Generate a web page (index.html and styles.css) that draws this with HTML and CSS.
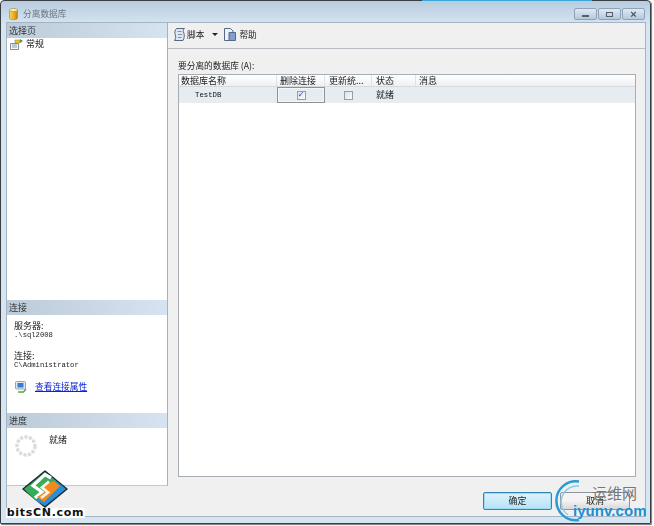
FILE: index.html
```html
<!DOCTYPE html>
<html lang="zh">
<head>
<meta charset="utf-8">
<title>分离数据库</title>
<link rel="stylesheet" href="styles.css">
</head>
<body>
<div class="window">
  <header class="titlebar">
    <svg class="db-icon" width="9" height="12" viewBox="0 0 9 12"><defs><linearGradient id="dbg" x1="0" x2="1" y1="0" y2="0"><stop offset="0" stop-color="#f6d45a"/><stop offset=".6" stop-color="#e8aa1c"/><stop offset="1" stop-color="#b97f10"/></linearGradient></defs><path d="M.5 2v8c0 1 1.8 1.6 4 1.6s4-.6 4-1.6V2z" fill="url(#dbg)" stroke="#9c7414" stroke-width=".5"/><ellipse cx="4.5" cy="2" rx="4" ry="1.6" fill="#fbeeb0" stroke="#9c7414" stroke-width=".5"/></svg>
    <span class="title">分离数据库</span>
    <div class="caps">
      <span class="cap"><i class="g-min"></i></span>
      <span class="cap"><i class="g-max"></i></span>
      <span class="cap cap-x">×</span>
    </div>
  </header>
  <div class="client">
    <div class="main">
      <aside class="side">
        <div class="side-sec grow">
          <div class="side-head">选择页</div>
          <div class="page-item">
            <svg width="13" height="11" viewBox="0 0 13 11"><path d="M.5 4.500h8v6h-8z" fill="#f4f6f8" stroke="#8a8f96"/><path d="M2 6h5M2 8h5" stroke="#7f9cc0"/><path d="M5 1h5v3H5z" fill="#f0c040" stroke="#a98a20" stroke-width=".6"/><path d="M10 0l3 2-3 2z" fill="#4a9a4a"/></svg>
            <span>常规</span>
          </div>
        </div>
        <div class="side-sec conn">
          <div class="side-head">连接</div>
          <div class="conn-body">
            <div class="kv"><div class="k">服务器:</div><div class="v">.\sql2008</div></div>
            <div class="kv"><div class="k">连接:</div><div class="v">C\Administrator</div></div>
            <div class="linkrow">
              <svg width="12" height="12" viewBox="0 0 12 12"><rect x=".5" y=".5" width="10" height="7.500" rx="1" fill="#dfe6ee" stroke="#98a4b2"/><rect x="2.500" y="2" width="6" height="4.500" fill="#2f7fd6"/><path d="M3 11h5.500l2.500-3" fill="none" stroke="#5aa63c" stroke-width="1.400"/></svg>
              <a href="#">查看连接属性</a>
            </div>
          </div>
        </div>
        <div class="side-sec prog">
          <div class="side-head">进度</div>
          <div class="prog-body">
            <svg width="22" height="22" viewBox="0 0 22 22"><circle cx="11" cy="11" r="9" fill="none" stroke="#dcdcdc" stroke-width="3.400" stroke-dasharray="3.200 1.300"/></svg>
            <span>就绪</span>
          </div>
        </div>
      </aside>
      <section class="content">
        <div class="toolbar">
          <svg width="11" height="13" viewBox="0 0 11 13"><path d="M2.500.5h8c-1.500 1-1.500 2.500-.7 4.500s.7 5-.8 7.500H.5c1.500-2 1.500-4 .7-6S1 2 2.500.5z" fill="#dfe7f2" stroke="#55677f"/><path d="M3.500 3.500h4M4 6.500h4M4 9.500h3.500" stroke="#7f90a8"/></svg>
          <span class="tb-label">脚本</span>
          <span class="caret"></span>
          <svg width="12" height="13" viewBox="0 0 12 13"><path d="M.5.500h6l2.500 2.500v9.500h-8.500z" fill="#eef2f8" stroke="#53688a"/><path d="M5 4.500h6.500v8H5z" fill="#7f9fd0" stroke="#53688a"/></svg>
          <span class="tb-label">帮助</span>
        </div>
        <div class="pane">
          <div class="grid-label">要分离的数据库 (A):</div>
          <div class="grid">
            <div class="row head">
              <div class="c c1">数据库名称</div>
              <div class="c c2">删除连接</div>
              <div class="c c3">更新统...</div>
              <div class="c c4">状态</div>
              <div class="c c5">消息</div>
            </div>
            <div class="row data">
              <div class="c c1 dbname">TestDB</div>
              <div class="c c2 focus"><span class="check on">✓</span></div>
              <div class="c c3 center"><span class="check"></span></div>
              <div class="c c4">就绪</div>
              <div class="c c5"></div>
            </div>
          </div>
        </div>
      </section>
    </div>
    <footer class="footer">
      <button class="btn primary">确定</button>
      <button class="btn wide">取消</button>
    </footer>
  </div>
</div>
<div class="wm-left">
  <svg width="46" height="38" viewBox="0 0 46 38"><path d="M23 1L45 19L23 37L1 19z" fill="#1a2a33" stroke="#1a2a33" stroke-width="1.500" stroke-linejoin="round"/><path d="M23 2L35 11.500L13 30L2 19z" fill="#35ad5c"/><path d="M35 11.500L44 19L23 36L13 30z" fill="#2b8fd2"/><path d="M29 8L23 4.500L11 15.500L20 22L13 28" fill="none" stroke="#fff" stroke-width="3.200"/><path d="M32 11L38 16L22 32L15 27L23 22L18 17z" fill="#f08a1c"/><path d="M27 11.500L20 17.500L26 22.500L19 28" fill="none" stroke="#fff1dd" stroke-width="2.800"/></svg>
  <span class="wm-text">bitsCN.com</span>
</div>
<div class="wm-right">
  <svg class="ring" width="46" height="44" viewBox="0 0 46 44"><path d="M27 2.500A19.500 19.500 0 1 0 27 41" fill="none" stroke="#2a9ad6" stroke-width="2.500"/><path d="M27 7A16 16 0 0 0 16 36" fill="none" stroke="#8accec" stroke-width="1.500"/></svg>
  <span class="wm-cn">运维网</span>
  <span class="wm-en">iyunv.com</span>
</div>
</body>
</html>
```
FILE: styles.css
```css
* { box-sizing: border-box; }
html, body { margin: 0; padding: 0; }
body {
  width: 654px; height: 526px; position: relative; overflow: hidden; background: #fff;
  font-family: "Noto Sans CJK SC", "Liberation Sans", sans-serif; font-size: 9px; color: #222;
}
.window {
  position: relative; width: 651px; height: 524px; display: flex; flex-direction: column;
  background: linear-gradient(#b8ccdf, #d6e5f2 24px);
  border: 1px solid #3a3f44; border-radius: 4px 4px 1px 1px;
  box-shadow: 1px 1px 1px #777; padding: 0 4px 6px 5px;
  filter: blur(.3px);
}
.window::before { content: ""; position: absolute; left: 421px; top: -1px; width: 170px; height: 1px; background: #3aa6d8; }
.titlebar { height: 21px; flex: none; display: flex; align-items: center; gap: 5px; padding: 5px 1px 0 3px; }
.title { color: #6b7681; font-size: 8.700px; line-height: 12px; }
.caps { margin-left: auto; display: flex; gap: 1px; }
.cap {
  width: 23px; height: 12px; border: 1px solid #8ea3b9; border-radius: 2px;
  background: linear-gradient(#dfe9f3, #b6c8da); display: flex; align-items: center; justify-content: center;
  font-size: 11px; line-height: 1; font-family: "Liberation Sans", sans-serif; font-weight: bold; color: #4b5560;
}
.g-min { width: 7px; height: 2px; background: #555f6a; margin-top: 3px; }
.g-max { width: 7px; height: 5px; border: 1px solid #555f6a; }
.client { flex: 1; min-height: 0; display: flex; flex-direction: column; background: #f0f0f0; border: 1px solid #a6b4c2; }
.main { flex: 1; min-height: 0; display: flex; }
.side { width: 161px; flex: none; display: flex; flex-direction: column; background: #fff; border-right: 1px solid #a9b0b8; border-bottom: 1px solid #c4c8cc; }
.side-sec { display: flex; flex-direction: column; }
.grow { flex: 1; min-height: 0; }
.side-head {
  height: 15px; flex: none; display: flex; align-items: center; padding-left: 2px; font-size: 9px; line-height: 12px; color: #333;
  background: linear-gradient(90deg, #bccbd9, #d6e3f0);
}
.page-item { display: flex; align-items: center; gap: 3px; height: 12px; padding-left: 3px; font-size: 9px; line-height: 12px; }
.conn { height: 113px; flex: none; }
.conn-body { padding: 6px 0 0 7px; }
.kv { height: 30px; }
.k { font-size: 9px; line-height: 10px; height: 10px; }
.v { font-family: "Liberation Mono", monospace; font-size: 7.200px; line-height: 8px; height: 8px; }
.linkrow { display: flex; align-items: center; gap: 8px; padding-left: 1px; }
.linkrow a { color: #0a22d8; font-size: 8.700px; line-height: 12px; }
.prog { height: 72px; flex: none; }
.prog-body { display: flex; gap: 8px; padding: 7px 0 0 8px; align-items: flex-start; font-size: 9px; line-height: 10px; }
.prog-body svg { flex: none; }
.prog-body span { margin: 0 0 0 4px; }
.content { flex: 1; min-width: 0; display: flex; flex-direction: column; }
.toolbar { height: 26px; flex: none; display: flex; align-items: center; gap: 3px; padding: 0 0 2px 6px; border-bottom: 1px solid #b9bec4; font-size: 8.700px; line-height: 12px; }
.toolbar svg:first-child { margin-right: -1px; }
.caret { width: 0; height: 0; border: 3px solid transparent; border-top: 3px solid #222; border-bottom: 0; margin: 0 3px 0 5px; }
.pane { flex: 1; min-height: 0; display: flex; flex-direction: column; padding: 11px 9px 9px 10px; }
.grid-label { height: 14px; font-size: 8.700px; flex: none; line-height: 12px; }
.grid { flex: 1; min-height: 0; background: #fff; border: 1px solid #a8adb3; }
.row { display: flex; }
.head { height: 12px; background: linear-gradient(#fff, #eef0f3); border-bottom: 1px solid #d5d9de; }
.data { height: 16px; background: #e7ecf0; }
.c { display: flex; align-items: center; padding-left: 3px; font-size: 9px; line-height: 10px; white-space: nowrap; overflow: hidden; border-right: 1px solid #dfe3e7; flex: none; }
.data .c { border-right: 0; }
.c1 { width: 98px; padding-left: 2px; }
.c2 { width: 48px; }
.c3 { width: 47px; padding-left: 4px; }
.c4 { width: 44px; padding-left: 4px; }
.c5 { flex: 1; border-right: 0; }
.data .dbname { font-family: "Liberation Mono", monospace; font-size: 7.300px; padding-left: 16px; color: #111; }
.data .focus { border: 1px solid #8d9296; justify-content: center; box-shadow: inset 0 0 0 1px #f4f6f8; padding: 0; }
.data .center { justify-content: center; padding: 0; }
.check {
  width: 9px; height: 9px; border: 1px solid #9a9ea3; background: linear-gradient(135deg, #dfe1e4, #fbfbfb);
  display: flex; align-items: center; justify-content: center; font-size: 8px; line-height: 1; color: #2a49b8;
  font-family: "DejaVu Sans", sans-serif; font-weight: bold;
}
.footer { height: 30px; flex: none; display: flex; justify-content: flex-end; gap: 8px; padding: 6px 15px 0 0; }
.btn {
  width: 69px; height: 18px; padding: 0; border: 1px solid #8f959b; border-radius: 2px;
  background: linear-gradient(#f4f4f4 45%, #d8d8d8); font: 9px/12px "Noto Sans CJK SC", sans-serif; color: #222;
}
.wide { width: 70px; }
.primary { border: 1px solid #2f87b5; background: linear-gradient(#def3fc, #b5e2f7); box-shadow: inset 0 0 0 1px #9bdaf5; }
.wm-left { position: absolute; left: 6px; top: 470px; width: 79px; height: 48px; }
.wm-left svg { position: absolute; left: 16px; top: 0; }
.wm-text {
  position: absolute; left: 0; top: 38px; width: 79px; height: 10px; background: #fff; color: #111;
  font: bold 11px/10px "DejaVu Sans", sans-serif; text-align: center; letter-spacing: .7px; white-space: nowrap;
}
.wm-right { position: absolute; left: 552px; top: 479px; width: 102px; height: 44px; }
.ring { position: absolute; left: 0; top: 0; }
.wm-cn { position: absolute; left: 40px; top: 6px; font-size: 15px; line-height: 16px; color: #777; }
.wm-en { position: absolute; left: 21px; top: 23px; font: bold 15px/17px "Liberation Sans", sans-serif; color: #1d8fd2; letter-spacing: .05px; }
```
